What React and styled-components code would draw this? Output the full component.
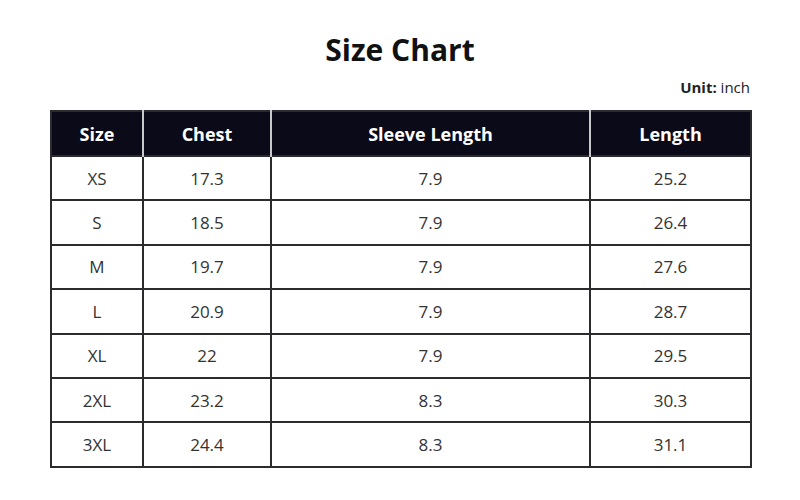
import styled, { createGlobalStyle } from "styled-components";

const GlobalStyle = createGlobalStyle`
  body {
    margin: 0;
    background: #fff;
    font-family: "Open Sans", "Noto Sans", sans-serif;
    color: #222;
  }
`;

const Page = styled.div`
  width: 800px;
  height: 500px;
  padding: 30px 50px 0;
  box-sizing: border-box;
  display: flex;
  flex-direction: column;
`;

const Title = styled.h1`
  margin: 0;
  text-align: center;
  font-size: 30px;
  line-height: 40px;
  font-weight: 700;
  color: #111;
`;

const Unit = styled.div`
  margin-top: 8px;
  text-align: right;
  font-size: 15px;
  line-height: 18px;
  color: #222;
  b {
    font-weight: 700;
  }
`;

const Table = styled.table`
  margin-top: 14px;
  width: 700px;
  border-collapse: collapse;
  table-layout: fixed;
  border: 2px solid #2b2b2e;
`;

const Th = styled.th`
  height: 43px;
  padding: 0;
  background: #0b0a18;
  color: #fff;
  font-size: 18px;
  font-weight: 700;
  text-align: center;
  border-left: 2px solid #c9c9cc;
  &:first-child {
    border-left: 2px solid #2b2b2e;
  }
`;

const Td = styled.td`
  height: 42.4px;
  padding: 0;
  text-align: center;
  font-size: 17px;
  color: #333;
  border: 2px solid #2b2b2e;
`;

const columns = [
  { label: "Size", width: 92 },
  { label: "Chest", width: 128 },
  { label: "Sleeve Length", width: 319 },
  { label: "Length", width: 161 },
];

const rows = [
  ["XS", "17.3", "7.9", "25.2"],
  ["S", "18.5", "7.9", "26.4"],
  ["M", "19.7", "7.9", "27.6"],
  ["L", "20.9", "7.9", "28.7"],
  ["XL", "22", "7.9", "29.5"],
  ["2XL", "23.2", "8.3", "30.3"],
  ["3XL", "24.4", "8.3", "31.1"],
];

export default function App() {
  return (
    <>
      <GlobalStyle />
      <Page>
        <Title>Size Chart</Title>
        <Unit>
          <b>Unit:</b> inch
        </Unit>
        <Table>
          <colgroup>
            {columns.map((c) => (
              <col key={c.label} style={{ width: c.width }} />
            ))}
          </colgroup>
          <thead>
            <tr>
              {columns.map((c) => (
                <Th key={c.label}>{c.label}</Th>
              ))}
            </tr>
          </thead>
          <tbody>
            {rows.map((r) => (
              <tr key={r[0]}>
                {r.map((v, i) => (
                  <Td key={i}>{v}</Td>
                ))}
              </tr>
            ))}
          </tbody>
        </Table>
      </Page>
    </>
  );
}
